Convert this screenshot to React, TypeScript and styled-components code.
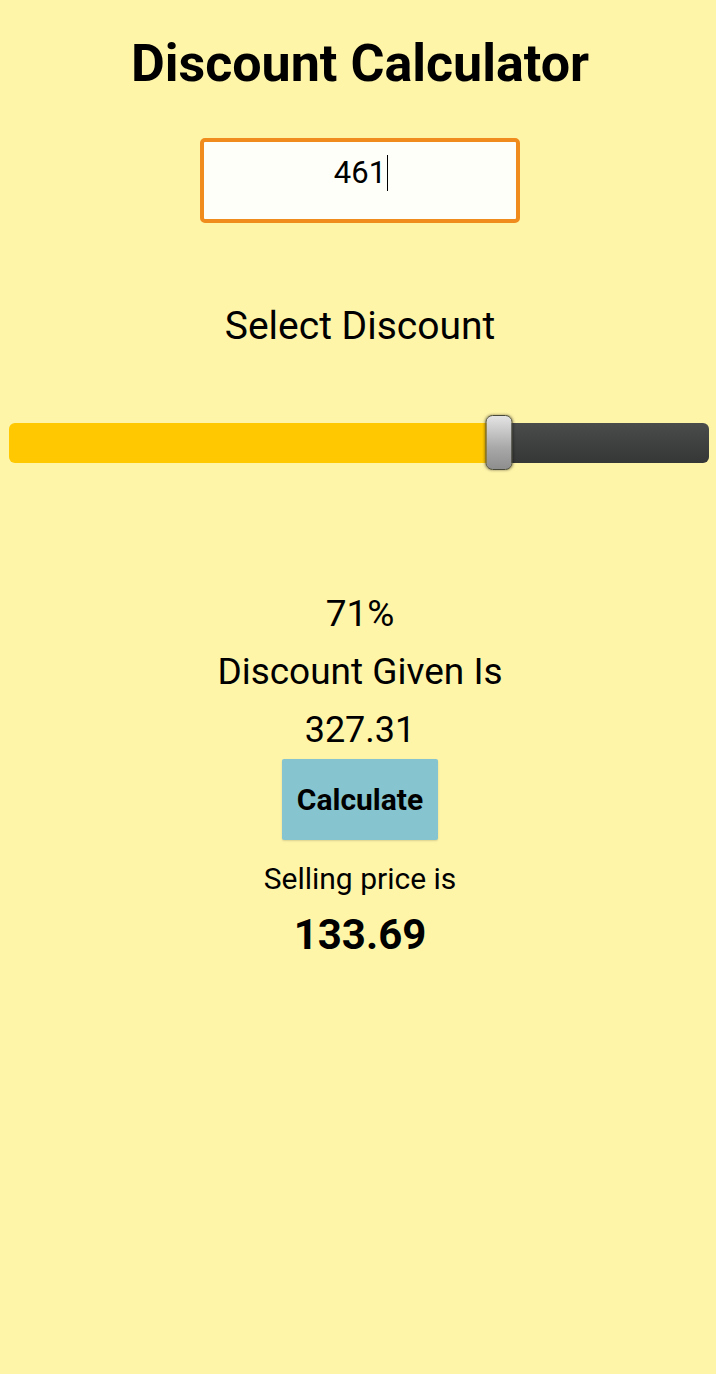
import React, { useState } from 'react';
import styled, { createGlobalStyle } from 'styled-components';

const GlobalStyle = createGlobalStyle`
  html, body {
    margin: 0;
    padding: 0;
    background: #fff5a9;
    font-family: Roboto, "Liberation Sans", sans-serif;
    color: #000;
  }
`;

const Page = styled.div`
  width: 716px;
  min-height: 1374px;
  box-sizing: border-box;
  padding-left: 4px;
  background: #fff5a9;
  display: flex;
  flex-direction: column;
  align-items: center;
`;

const Title = styled.h1`
  margin: 30px 0 0;
  font-size: 52px;
  font-weight: 700;
  line-height: 68px;
`;

const AmountBox = styled.div`
  margin-top: 40px;
  width: 312px;
  height: 77px;
  box-sizing: content-box;
  border: 4px solid #f08c1e;
  border-radius: 5px;
  background: #fffffa;
  display: flex;
  align-items: center;
  justify-content: center;
  font-size: 31px;
`;

const AmountText = styled.div`
  display: flex;
  align-items: center;
  margin-top: -16px;
  padding-left: 2px;
`;

const Caret = styled.span`
  display: inline-block;
  width: 1px;
  height: 36px;
  background: #000;
  margin-left: 1px;
`;

const Label = styled.div<{ $size: number; $bold?: boolean }>`
  font-size: ${(p) => p.$size}px;
  font-weight: ${(p) => (p.$bold ? 700 : 400)};
  line-height: 58px;
`;

const SliderWrap = styled.div`
  width: 700px;
  height: 60px;
  margin-top: 58px;
  margin-left: -2px;
  display: flex;
  align-items: center;
  position: relative;
`;

const Filled = styled.div`
  height: 40px;
  background: #ffc800;
  border-radius: 6px 0 0 6px;
`;

const Rest = styled.div`
  flex: 1;
  height: 40px;
  background: linear-gradient(#4a4c4b, #353736);
  border-radius: 0 6px 6px 0;
`;

const Thumb = styled.div`
  position: absolute;
  top: 2px;
  width: 25px;
  height: 53px;
  border: 1px solid #4a4a3a;
  border-radius: 7px;
  background: linear-gradient(#e4e4e4, #a8a8a8 60%, #8e8e8e);
  box-shadow: 0 0 3px rgba(0, 0, 0, 0.5);
  transform: translateX(-50%);
`;

const Results = styled.div`
  margin-top: 112px;
  display: flex;
  flex-direction: column;
  align-items: center;
`;

const CalcButton = styled.button`
  width: 156px;
  height: 81px;
  border: none;
  border-radius: 2px;
  background: #86c5cf;
  font-family: Roboto, "Liberation Sans", sans-serif;
  font-size: 30px;
  font-weight: 700;
  color: #000;
  box-shadow: 0 1px 2px rgba(0, 0, 0, 0.15);
`;

const Selling = styled.div`
  margin-top: 20px;
  font-size: 30px;
  line-height: 38px;
`;

const Price = styled.div`
  margin-top: 11px;
  font-size: 42px;
  font-weight: 700;
  line-height: 52px;
`;

export default function App() {
  const [amount] = useState(461);
  const [pct] = useState(71);
  const discount = ((amount * pct) / 100).toFixed(2);
  const selling = (amount - (amount * pct) / 100).toFixed(2);
  const thumbX = 487;

  return (
    <>
      <GlobalStyle />
      <Page>
        <Title>Discount Calculator</Title>
        <AmountBox>
          <AmountText>
            {amount}
            <Caret />
          </AmountText>
        </AmountBox>
        <Label $size={39} style={{ marginTop: 74 }}>
          Select Discount
        </Label>
        <SliderWrap>
          <Filled style={{ width: thumbX }} />
          <Rest />
          <Thumb style={{ left: thumbX + 3 }} />
        </SliderWrap>
        <Results>
          <Label $size={37}>{pct}%</Label>
          <Label $size={37}>Discount Given Is</Label>
          <Label $size={36}>{discount}</Label>
          <CalcButton>Calculate</CalcButton>
          <Selling>Selling price is</Selling>
          <Price>{selling}</Price>
        </Results>
      </Page>
    </>
  );
}
